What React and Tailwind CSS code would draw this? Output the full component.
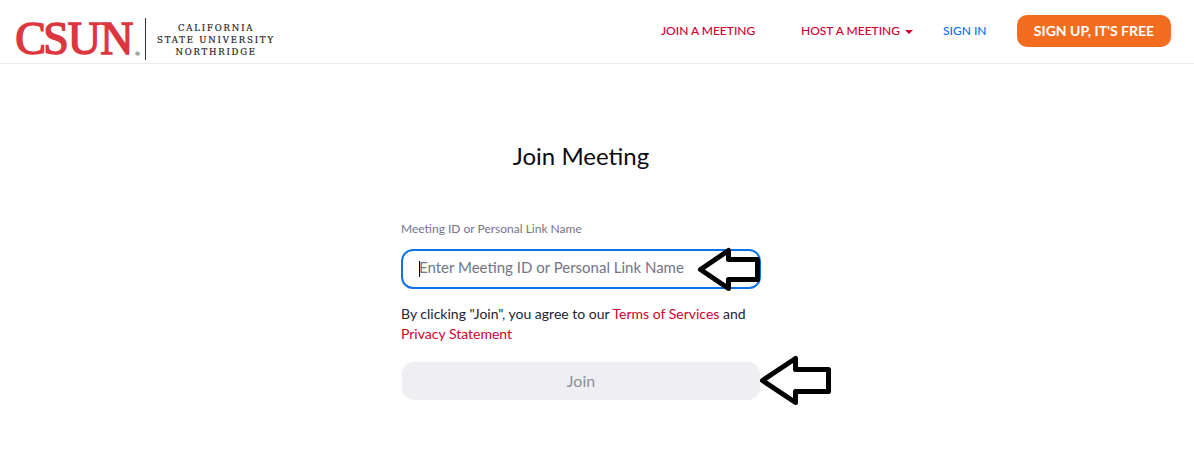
import { useState } from "react";

function Logo() {
  return (
    <a href="#" className="block ml-[14px] mt-[17px]" aria-label="CSUN home">
      <svg width="262" height="44" viewBox="14 17 262 44" className="block overflow-visible">
        <text
          x="15.2 43.2 67.8 100.2"
          y="54.4"
          strokeWidth="1.5"
          className="font-['Liberation_Serif',serif] text-[46px] fill-[#dc373e] stroke-[#dc373e]"
        >
          CSUN
        </text>
        <text x="134.4" y="55.5" className="font-['DejaVu_Sans',sans-serif] text-[6px] fill-[#222]">
          ®
        </text>
        <rect x="145" y="18" width="1" height="42" fill="#333" />
        <g className="font-['DejaVu_Serif',serif] text-[8.5px] fill-[#222] stroke-[#222]" strokeWidth="0.2">
          <text x="178" y="30.5" textLength="74.5">CALIFORNIA</text>
          <text x="157" y="42.5" textLength="116">STATE UNIVERSITY</text>
          <text x="175.5" y="54.5" textLength="79.5">NORTHRIDGE</text>
        </g>
      </svg>
    </a>
  );
}

function Header() {
  return (
    <header className="flex h-16 justify-between border-b border-[#ebebeb]">
      <Logo />
      <nav className="flex h-[62px] items-center pr-[23px] text-[12px] font-medium text-[#d1002f]">
        <a href="#" className="mr-[45px] w-[95px] whitespace-nowrap">JOIN A MEETING</a>
        <a href="#" className="mr-[30px] flex w-[112px] items-center whitespace-nowrap">
          HOST A MEETING
          <span className="ml-auto mt-[2px] border-x-4 border-t-4 border-x-transparent border-t-[#d1002f]" />
        </a>
        <a href="#" className="mr-[30px] w-[44px] whitespace-nowrap text-[#0e72ed]">SIGN IN</a>
        <a
          href="#"
          className="flex h-8 w-[154px] items-center justify-center rounded-[10px] bg-[#f36d21] pb-px text-[14px] font-bold text-white"
        >
          SIGN UP, IT'S FREE
        </a>
      </nav>
    </header>
  );
}

export default function App() {
  const [meetingId, setMeetingId] = useState("");

  return (
    <div className="h-[459px] overflow-hidden bg-white font-[Lato,sans-serif] text-[#232333]">
      <Header />

      <main className="ml-[401px] w-[360px]">
        <h1 className="pt-[76px] text-center text-[24px] leading-8 text-[#0c0c14]">Join Meeting</h1>

        <label htmlFor="meeting-id" className="mt-[49px] block text-[12px] leading-4 text-[#747487]">
          Meeting ID or Personal Link Name
        </label>

        <div className="relative mt-[12px] flex h-10 items-center rounded-xl border-2 border-[#0e72ed] pl-4">
          <span className="h-4 w-px bg-black" />
          <input
            id="meeting-id"
            value={meetingId}
            onChange={(e) => setMeetingId(e.target.value)}
            placeholder="Enter Meeting ID or Personal Link Name"
            className="-ml-px w-[300px] pb-[3px] text-[15px] outline-none placeholder:text-[#747487]"
          />
          {/* Pointer to the input */}
          <svg width="66" height="46" viewBox="697 246 66 46" className="absolute left-[294px] top-[-5px]">
            <path
              d="M700.5 269.5 728.5 250.5V259.5H757.5V279.5H728.5V288.5Z"
              fill="white"
              stroke="black"
              strokeWidth="5"
              strokeLinejoin="round"
            />
          </svg>
        </div>

        <p className="mt-[15px] text-[14px] leading-5">
          By clicking "Join", you agree to our{" "}
          <a href="#" className="text-[#d1002f]">Terms of Services</a> and
          <br />
          <a href="#" className="text-[#d1002f]">Privacy Statement</a>
        </p>

        <div className="relative mt-[18px] px-px">
          <button className="block h-[38px] w-full rounded-xl bg-[#eeeef3] text-[16px] text-[#909096]">Join</button>
          {/* Pointer to the join button */}
          <svg width="76" height="52" viewBox="758 354 76 52" className="absolute left-[357px] top-[-8px]">
            <path
              d="M762.5 380.5 795.5 358.5V369.5H828.5V391.5H795.5V402.5Z"
              fill="white"
              stroke="black"
              strokeWidth="5"
              strokeLinejoin="round"
            />
          </svg>
        </div>
      </main>
    </div>
  );
}
